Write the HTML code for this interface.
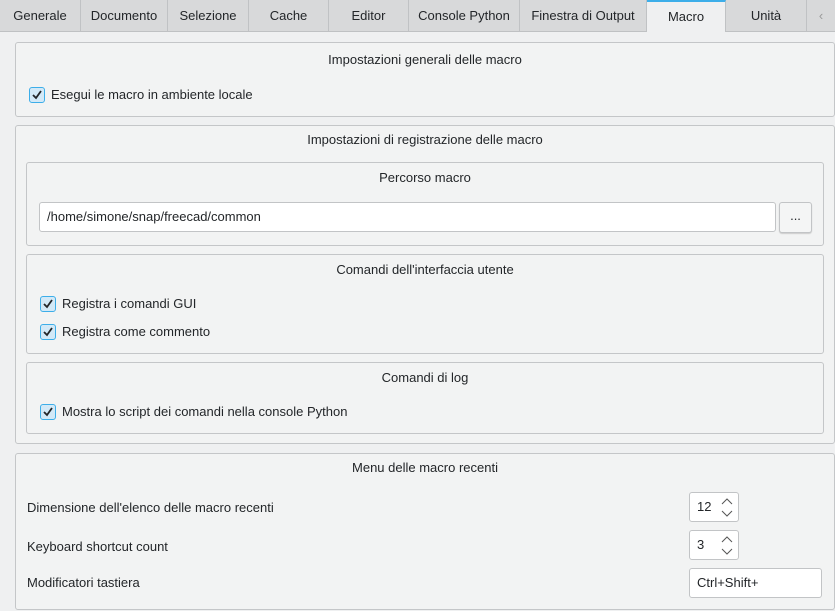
<!DOCTYPE html><html><head><style>
body{margin:0;width:835px;height:611px;background:#eff0f1;font-family:"Liberation Sans",sans-serif;font-size:13px;color:#232629;position:relative;overflow:hidden}
.a{position:absolute}
.tabs{left:0;top:0;width:835px;height:31px;background:#d8d9da;border-bottom:1px solid #bfc1c3}
.tab{position:absolute;top:0;height:31px;line-height:31px;text-align:center;border-right:1px solid #c0c2c4}
.act{background:#eff0f1;border-top:2px solid #3daee9;height:30px;line-height:29px;top:0}
.g{position:absolute;border:1px solid #c4c6c8;border-radius:3px;background:#f2f3f3}
.t{position:absolute;left:0;right:0;text-align:center}
.cb{position:absolute;width:14px;height:14px;border:1px solid #3daee9;border-radius:3px;background:#d3e9f7}
.cb svg{position:absolute;left:1px;top:1px}
.in{position:absolute;background:#fff;border:1px solid #c2c4c6;border-radius:3px;line-height:28px;padding-left:7px;box-sizing:border-box}
</style></head><body>
<div class="a tabs">
<div class="tab" style="left:0;width:80px">Generale</div>
<div class="tab" style="left:81px;width:86px">Documento</div>
<div class="tab" style="left:168px;width:80px">Selezione</div>
<div class="tab" style="left:249px;width:79px">Cache</div>
<div class="tab" style="left:329px;width:79px">Editor</div>
<div class="tab" style="left:409px;width:110px">Console Python</div>
<div class="tab" style="left:520px;width:126px">Finestra di Output</div>
<div class="tab act" style="left:647px;width:78px">Macro</div>
<div class="tab" style="left:726px;width:80px">Unità</div>
<div class="tab" style="left:807px;width:28px;color:#999;border:none">‹</div>
</div>
<div class="g" style="left:15px;top:42px;width:818px;height:73px">
<div class="t" style="top:9px">Impostazioni generali delle macro</div>
<div class="cb" style="left:13px;top:44px"><svg width="12" height="12"><path d="M2 6l3 3 5-7" stroke="#232629" stroke-width="1.8" fill="none"/></svg></div>
<div class="a" style="left:35px;top:44px">Esegui le macro in ambiente locale</div>
</div>
<div class="g" style="left:15px;top:125px;width:818px;height:317px">
<div class="t" style="top:6px">Impostazioni di registrazione delle macro</div>
<div class="g" style="left:10px;top:36px;width:796px;height:82px">
<div class="t" style="top:7px">Percorso macro</div>
<div class="in" style="left:12px;top:39px;width:737px;height:30px">/home/simone/snap/freecad/common</div>
<div class="in" style="left:752px;top:39px;width:33px;height:31px;background:#f4f5f5;padding:0;text-align:center;line-height:26px;box-shadow:0 1px 1px #ccc">...</div>
</div>
<div class="g" style="left:10px;top:128px;width:796px;height:98px">
<div class="t" style="top:7px">Comandi dell'interfaccia utente</div>
<div class="cb" style="left:13px;top:41px"><svg width="12" height="12"><path d="M2 6l3 3 5-7" stroke="#232629" stroke-width="1.8" fill="none"/></svg></div>
<div class="a" style="left:35px;top:41px">Registra i comandi GUI</div>
<div class="cb" style="left:13px;top:69px"><svg width="12" height="12"><path d="M2 6l3 3 5-7" stroke="#232629" stroke-width="1.8" fill="none"/></svg></div>
<div class="a" style="left:35px;top:69px">Registra come commento</div>
</div>
<div class="g" style="left:10px;top:236px;width:796px;height:70px">
<div class="t" style="top:7px">Comandi di log</div>
<div class="cb" style="left:13px;top:41px"><svg width="12" height="12"><path d="M2 6l3 3 5-7" stroke="#232629" stroke-width="1.8" fill="none"/></svg></div>
<div class="a" style="left:35px;top:41px">Mostra lo script dei comandi nella console Python</div>
</div>
</div>
<div class="g" style="left:15px;top:453px;width:818px;height:155px">
<div class="t" style="top:6px">Menu delle macro recenti</div>
<div class="a" style="left:11px;top:46px">Dimensione dell'elenco delle macro recenti</div>
<div class="a" style="left:11px;top:85px">Keyboard shortcut count</div>
<div class="a" style="left:11px;top:121px">Modificatori tastiera</div>
<div class="in" style="left:673px;top:38px;width:50px;height:30px">12<svg class="a" style="left:31px;top:5px" width="12" height="20"><path d="M1 6l5-5 5 5M1 13l5 5 5-5" stroke="#555" fill="none"/></svg></div>
<div class="in" style="left:673px;top:76px;width:50px;height:30px">3<svg class="a" style="left:31px;top:5px" width="12" height="20"><path d="M1 6l5-5 5 5M1 13l5 5 5-5" stroke="#555" fill="none"/></svg></div>
<div class="in" style="left:673px;top:114px;width:133px;height:30px">Ctrl+Shift+</div>
</div>
</body></html>
